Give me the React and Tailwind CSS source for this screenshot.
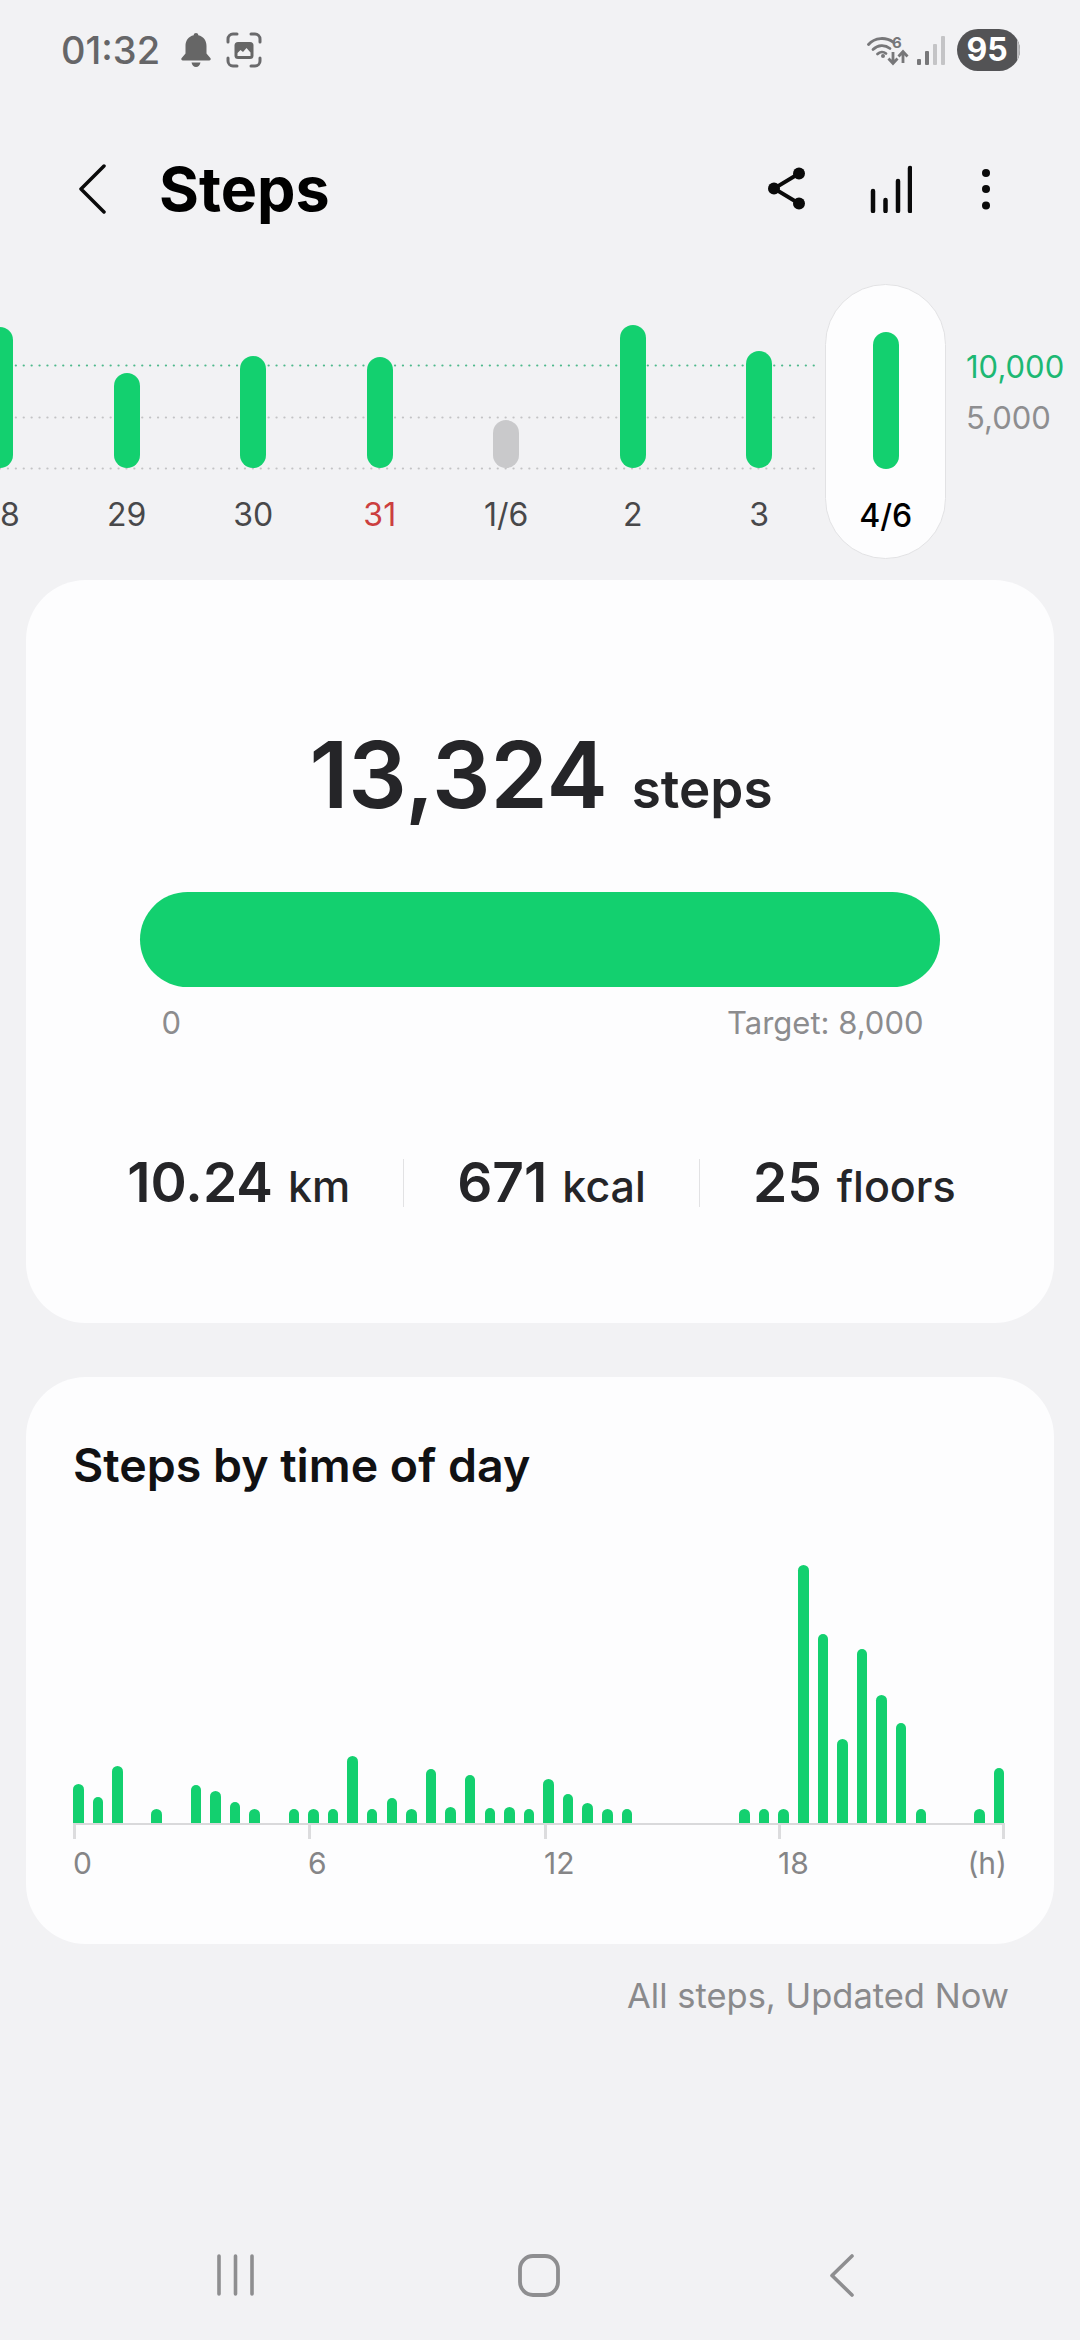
const trend = [
  { label: '28', height: 141 },
  { label: '29', height: 95 },
  { label: '30', height: 112 },
  { label: '31', height: 111, red: true },
  { label: '1/6', height: 48, gray: true },
  { label: '2', height: 143 },
  { label: '3', height: 117 },
  { label: '4/6', height: 137, selected: true },
]

// one entry per half hour
const hourly = [
  39, 26, 57, 0, 14, 0, 38, 32, 21, 14, 0, 14, 14, 14, 67, 14, 25, 14, 54, 16, 48, 15, 16, 14,
  44, 29, 20, 14, 14, 0, 0, 0, 0, 0, 14, 14, 14, 258, 189, 84, 174, 128, 100, 14, 0, 0, 14, 55,
]

function StatusBar() {
  return (
    <div className="flex h-[100px] items-center justify-between pl-[61px] pr-[60px]">
      <div className="flex items-center">
        <span className="text-[38px] font-medium leading-none text-[#666668]">01:32</span>
        <svg className="ml-[21px]" width="30" height="34" viewBox="0 0 30 34" fill="#666666">
          <path d="M15 0c1.3 0 2.2.9 2.3 2.2C22.600 3.300 25.500 7.500 25.500 13v7.500l3.800 4.500c.9 1 .3 2.500-1 2.500H1.700c-1.300 0-1.900-1.500-1-2.500l3.800-4.500V13c0-5.500 2.900-9.700 8.200-10.800C12.800.9 13.700 0 15 0z" />
          <path d="M10.500 29.500h9c-.4 2.700-2.200 4.500-4.500 4.500s-4.100-1.800-4.500-4.500z" />
        </svg>
        <svg className="ml-[15px]" width="36" height="36" viewBox="0 0 36 36" fill="none">
          <path d="M2 10V7a5 5 0 0 1 5-5h4M25 2h4a5 5 0 0 1 5 5v3M34 26v3a5 5 0 0 1-5 5h-4M11 34H7a5 5 0 0 1-5-5v-3" stroke="#6a6a6c" strokeWidth="3" strokeLinecap="round" />
          <rect x="8.500" y="10" width="19" height="17" rx="3.500" fill="#666666" />
          <path d="M11.500 24v-3l3-3 2.500 2 3.500-4 4 4.500V24z" fill="#f2f2f4" />
        </svg>
      </div>
      <div className="flex items-center">
        <div className="relative h-[32px] w-[48px]">
          <svg className="absolute left-0 top-0" width="48" height="32" viewBox="0 0 48 32" fill="none">
            <path d="M1.500 10.500C8 3 19 3 26 8" stroke="#777779" strokeWidth="2.800" strokeLinecap="round" />
            <path d="M6 15.500c5-5 12-5 17-1" stroke="#777779" strokeWidth="2.800" strokeLinecap="round" />
            <path d="M10.500 20c2.500-2.500 6-2.500 8.500-.5" stroke="#777779" strokeWidth="2.800" strokeLinecap="round" />
            <circle cx="16" cy="22" r="2" fill="#777779" />
            <path d="M26 18v11M21.500 24.500l4.500 5 4.500-5" stroke="#777779" strokeWidth="2.800" />
            <path d="M36 29V18M31.500 22.500l4.500-5 4.500 5" stroke="#777779" strokeWidth="2.800" />
          </svg>
          <span className="absolute left-[25px] top-0 text-[15px] font-bold leading-[18px] text-[#777779]">6</span>
        </div>
        <div className="ml-[2px] flex h-[29px] items-end gap-[4px]">
          <div className="h-[6px] w-[4px] rounded-[1px] bg-[#777779]" />
          <div className="h-[14px] w-[4px] rounded-[1px] bg-[#777779]" />
          <div className="h-[21px] w-[4px] rounded-[1px] bg-[#c4c4c6]" />
          <div className="h-[29px] w-[4px] rounded-[1px] bg-[#c4c4c6]" />
        </div>
        <div className="relative ml-[12px] flex h-[42px] w-[63px] items-center justify-center overflow-hidden rounded-full bg-[#535355] pr-[3px] text-[32px] font-bold leading-none text-white">
          95
          <div className="absolute bottom-0 right-0 top-0 w-[3px] bg-[#bdbdbf]" />
        </div>
      </div>
    </div>
  )
}

function Header() {
  return (
    <div className="flex h-[178px] items-center">
      <svg className="ml-[79px]" width="28" height="50" viewBox="0 0 28 50" fill="none">
        <path d="M25 2 2 25l23 23" stroke="#0a0a0a" strokeWidth="3.500" strokeLinecap="round" strokeLinejoin="round" />
      </svg>
      <h1 className="ml-[52px] text-[61px] font-bold leading-none text-black">Steps</h1>
      <svg className="ml-[437px]" width="40" height="46" viewBox="0 0 40 46" fill="none">
        <path d="M32 7.500 7 22.500l25 15" stroke="#0a0a0a" strokeWidth="3.800" />
        <circle cx="7" cy="22.500" r="6" fill="#0a0a0a" />
        <circle cx="32" cy="7.500" r="6" fill="#0a0a0a" />
        <circle cx="32" cy="37.500" r="6" fill="#0a0a0a" />
      </svg>
      <svg className="ml-[61px]" width="44" height="48" viewBox="0 0 44 48" fill="none" stroke="#0a0a0a" strokeWidth="4.500" strokeLinecap="round">
        <path d="M5 26v20M17.500 35v11M30 16v30M42 3v43" />
      </svg>
      <svg className="ml-[69px]" width="10" height="42" viewBox="0 0 10 42" fill="#0a0a0a">
        <circle cx="5" cy="5" r="4" />
        <circle cx="5" cy="21" r="4" />
        <circle cx="5" cy="37.500" r="4" />
      </svg>
    </div>
  )
}

function DottedLine({ top, color }) {
  return (
    <svg className="absolute left-0" style={{ top }} width="821" height="3" fill="none">
      <line x1="0" y1="1.500" x2="821" y2="1.500" stroke={color} strokeWidth="2.200" strokeDasharray="0.100 7.800" strokeLinecap="round" />
    </svg>
  )
}

function TrendChart() {
  return (
    <div className="relative mt-[6px] h-[275px] overflow-hidden">
      <DottedLine top={80} color="#4fb98c" />
      <DottedLine top={132} color="#c3c3c5" />
      <DottedLine top={183} color="#c3c3c5" />
      <div className="relative ml-[-63px] flex h-full">
        {trend.map((day) => (
          <div key={day.label} className="flex h-full w-[126.500px] shrink-0 justify-center">
            <div
              className={
                day.selected
                  ? 'flex h-full w-[121px] flex-col items-center rounded-full border border-[#e2e2e4] bg-[#fdfdfe]'
                  : 'flex h-full w-[121px] flex-col items-center'
              }
            >
              <div className="flex h-[184px] shrink-0 items-end">
                <div
                  className={day.gray ? 'w-[26px] rounded-full bg-[#c9c9cb]' : 'w-[26px] rounded-full bg-[#13d06f]'}
                  style={{ height: day.height }}
                />
              </div>
              <span
                className={
                  day.selected
                    ? 'mt-[28px] text-[32px] font-medium leading-[38px] text-black'
                    : day.red
                      ? 'mt-[28px] text-[32px] leading-[38px] text-[#cc3f3f]'
                      : 'mt-[28px] text-[32px] leading-[38px] text-[#48484a]'
                }
              >
                {day.label}
              </span>
            </div>
          </div>
        ))}
        <div className="ml-[17px] flex shrink-0 flex-col pt-[57px] text-[31px] leading-[51px]">
          <span className="text-[#1db873]">10,000</span>
          <span className="text-[#8e8e90]">5,000</span>
        </div>
      </div>
    </div>
  )
}

function Stat({ value, unit }) {
  return (
    <div className="flex items-baseline gap-[15px] text-[#252528]">
      <span className="text-[55px] font-semibold leading-none">{value}</span>
      <span className="text-[43px] font-medium leading-none">{unit}</span>
    </div>
  )
}

function SummaryCard() {
  return (
    <section className="mx-[26px] mt-[21px] flex h-[743px] flex-col items-center rounded-[60px] bg-[#fdfdfe]">
      <div className="ml-[2px] mt-[140px] flex items-baseline gap-[24px] text-[#252528]">
        <span className="text-[92px] font-semibold leading-[110px]">13,324</span>
        <span className="text-[53px] font-semibold leading-none">steps</span>
      </div>
      <div className="mt-[62px] h-[95px] w-[800px] rounded-full bg-[#13d06f]" />
      <div className="ml-[5px] mt-[18px] flex w-[762px] items-center justify-between text-[31px] leading-[36px] text-[#8c8c8e]">
        <span>0</span>
        <span>Target: 8,000</span>
      </div>
      <div className="ml-[3px] mt-[114px] flex items-center gap-[53px]">
        <Stat value="10.24" unit="km" />
        <div className="h-[48px] w-px bg-[#e2e2e4]" />
        <Stat value="671" unit="kcal" />
        <div className="h-[48px] w-px bg-[#e2e2e4]" />
        <Stat value="25" unit="floors" />
      </div>
    </section>
  )
}

function Tick({ label, width }) {
  return (
    <div className="flex shrink-0 flex-col" style={{ width }}>
      <div className="h-[14px] w-[3px] bg-[#dcdcde]" />
      <span className="mt-[6px] text-[30px] leading-[36px] text-[#858587]">{label}</span>
    </div>
  )
}

function HourlyCard() {
  return (
    <section className="mx-[26px] mt-[54px] h-[567px] rounded-[60px] bg-[#fdfdfe]">
      <h2 className="ml-[47px] pt-[60px] text-[46.500px] font-semibold leading-[56px] text-[#111113]">Steps by time of day</h2>
      <div className="ml-[42.500px] mt-[70px] flex h-[260px] items-end">
        {hourly.map((height, i) => (
          <div key={i} className="flex w-[19.600px] shrink-0 justify-center">
            {height > 0 ? (
              <div className="w-[10.500px] rounded-t-full bg-[#13d06f]" style={{ height }} />
            ) : null}
          </div>
        ))}
      </div>
      <div className="ml-[47px] w-[932px]">
        <div className="h-[2px] bg-[#d9d9db]" />
        <div className="flex">
          <Tick label="0" width={235} />
          <Tick label="6" width={236} />
          <Tick label="12" width={234} />
          <Tick label="18" width={224} />
          <div className="flex w-[3px] shrink-0 flex-col items-end">
            <div className="h-[14px] w-[3px] shrink-0 bg-[#dcdcde]" />
            <span className="mr-[-2px] mt-[6px] text-[30px] leading-[36px] text-[#858587]">(h)</span>
          </div>
        </div>
      </div>
    </section>
  )
}

function NavBar() {
  return (
    <div className="mt-auto flex h-[130px] items-center pl-[217px]">
      <svg width="37" height="42" viewBox="0 0 37 42" fill="none" stroke="#8e8e90" strokeWidth="3.600" strokeLinecap="round">
        <path d="M2 2v38M18.500 2v38M35 2v38" />
      </svg>
      <svg className="ml-[264px]" width="42" height="43" viewBox="0 0 42 43" fill="none">
        <rect x="2" y="2" width="38" height="39" rx="13" stroke="#8e8e90" strokeWidth="3.800" />
      </svg>
      <svg className="ml-[270px]" width="24" height="43" viewBox="0 0 24 43" fill="none">
        <path d="M22 2 2 21.500 22 41" stroke="#8e8e90" strokeWidth="3.600" strokeLinecap="round" strokeLinejoin="round" />
      </svg>
    </div>
  )
}

export default function App() {
  return (
    <div className="flex h-[2340px] w-[1080px] flex-col overflow-hidden bg-[#f2f2f4] font-['Inter',sans-serif]">
      <StatusBar />
      <Header />
      <TrendChart />
      <SummaryCard />
      <HourlyCard />
      <p className="mt-[32px] pr-[71px] text-right text-[34.500px] leading-[40px] text-[#8a8a8c]">All steps, Updated Now</p>
      <NavBar />
    </div>
  )
}
